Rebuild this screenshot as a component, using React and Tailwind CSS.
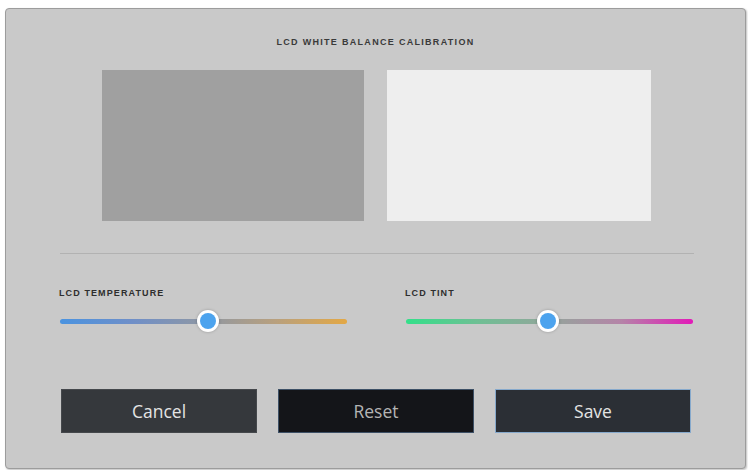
import React, { useState } from "react";

const labelFont = { fontFamily: '"Liberation Sans", Arial, sans-serif' };

function Slider({ value, gradient, label }) {
  return (
    <div className="w-[287px]">
      <div
        className="h-[10px] text-[9px] leading-[10px] font-bold tracking-[1.1px] text-[#2e2e2e] -ml-[1px]"
        style={labelFont}
      >
        {label}
      </div>
      <div className="relative mt-[12px] h-[22px] flex items-center">
        <div className={`h-[5px] w-full rounded-full ${gradient}`} />
        <div
          className="absolute top-0 h-[22px] w-[22px] -ml-[11px] rounded-full bg-white shadow-[0_0_3px_rgba(0,0,0,0.25)] flex items-center justify-center"
          style={{ left: `${value}%` }}
        >
          <div className="h-[16px] w-[16px] rounded-full bg-[#4ca3ee]" />
        </div>
      </div>
    </div>
  );
}

export default function App() {
  const [temp] = useState(51.5);
  const [tint] = useState(49.5);

  return (
    <div className="w-[748px] h-[470px] bg-white pt-[8px] pl-[5px] overflow-hidden">
      <div className="w-[741px] h-[461px] rounded-[4px] border border-[#9c9c9c] bg-[#c9c9c9] shadow-[1px_1px_2px_rgba(0,0,0,0.25)] flex flex-col">
        {/* Title */}
        <div
          className="mt-[28px] h-[10px] text-center text-[9px] leading-[10px] font-bold tracking-[1.3px] text-[#3a3a3a]"
          style={labelFont}
        >
          LCD WHITE BALANCE CALIBRATION
        </div>

        {/* Preview swatches */}
        <div className="mt-[23px] flex gap-[23px] pl-[96px]">
          <div className="w-[262px] h-[151px] bg-[#a0a0a0]" />
          <div className="w-[264px] h-[151px] bg-[#eeeeee]" />
        </div>

        {/* Divider */}
        <div className="mt-[32px] ml-[54px] w-[634px] h-px bg-[#b2b2b2]" />

        {/* Sliders */}
        <div className="mt-[34px] ml-[54px] flex gap-[59px]">
          <Slider
            label="LCD TEMPERATURE"
            value={temp}
            gradient="bg-[linear-gradient(90deg,#4a93e0_0%,#6f8fc8_25%,#8e97a4_50%,#b8a07e_75%,#e3a845_100%)]"
          />
          <Slider
            label="LCD TINT"
            value={tint}
            gradient="bg-[linear-gradient(90deg,#33e08a_0%,#6fbf94_25%,#93a59b_50%,#b584a8_75%,#e21ab8_100%)]"
          />
        </div>

        {/* Buttons */}
        <div
          className="mt-[57px] ml-[55px] flex gap-[21px] text-[17.5px] font-medium text-[#e4e4e4]"
          style={{ fontFamily: '"Open Sans", "Noto Sans", sans-serif' }}
        >
          <button className="w-[196px] h-[44px] bg-[#35383c] border border-[#45484c]">
            Cancel
          </button>
          <button className="w-[196px] h-[44px] bg-[#141519] border border-[#3d5066] text-[#b4b4b4]">
            Reset
          </button>
          <button className="w-[196px] h-[44px] bg-[#2b2f35] border border-[#86a9cc]">
            Save
          </button>
        </div>
      </div>
    </div>
  );
}
